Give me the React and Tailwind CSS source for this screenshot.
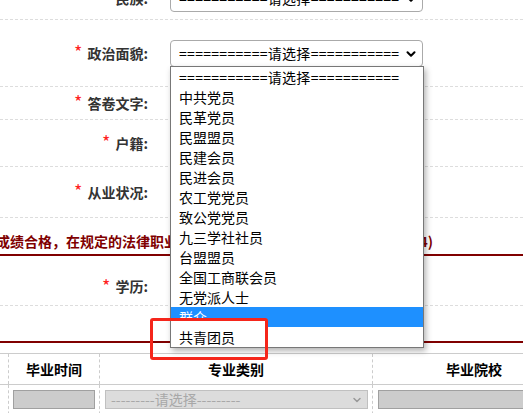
import React from "react";
import { ChevronDown } from "lucide-react";

const options = [
    "===========请选择===========",
    "中共党员",
    "民革党员",
    "民盟盟员",
    "民建会员",
    "民进会员",
    "农工党党员",
    "致公党党员",
    "九三学社社员",
    "台盟盟员",
    "全国工商联会员",
    "无党派人士",
    "群众",
    "共青团员",
];

const Label = ({ text, required = true }) => (
    <div className="w-[148px] shrink-0 flex justify-end items-center text-[14px] font-bold text-[#333] whitespace-nowrap">
        {required && <span className="font-normal text-[18px] leading-none text-[#f22] mr-[5px] -mt-[4px]">*</span>}
        <span>{text}:</span>
    </div>
);

const FakeSelect = () => (
    <div className="relative ml-[22px] w-[253px] h-[27px] border border-[#aaa] rounded-[4px] bg-white flex items-center pl-[8px] text-[14px] tracking-[0.3px] text-black whitespace-nowrap">
        ===========请选择===========
        <ChevronDown className="absolute right-[4px] top-[6px] w-[14px] h-[14px]" strokeWidth={3.5} />
    </div>
);

const Row = ({ h, label, children, className = "" }) => (
    <div className={`flex items-center border-b border-dashed border-[#ddd] ${h} ${className}`}>
        <Label text={label} />
        {children}
    </div>
);

export default function App() {
    return (
        <div className="relative w-[523px] h-[413px] overflow-hidden bg-white font-['Noto_Sans_CJK_SC','Microsoft_YaHei',sans-serif]">
            <div className="-mt-[22px]">
                <Row h="h-[42px]" label="民族">
                    <FakeSelect />
                </Row>
                <Row h="h-[67px]" label="政治面貌">
                    <FakeSelect />
                </Row>
                <Row h="h-[33px]" label="答卷文字" />
                <Row h="h-[47px]" label="户籍" />
                <Row h="h-[51px]" label="从业状况" />

                <div className="h-[38px] flex items-end pb-[2px] border-b-2 border-[#800000]">
                    <div className="flex w-[437px] -ml-[4px] text-[14px] font-bold text-[#800000] whitespace-nowrap">
                        <span className="flex-1 min-w-0 overflow-hidden">成绩合格，在规定的法律职业资格考试年度内完成申请（201</span>
                        <span>4)</span>
                    </div>
                </div>

                <Row h="h-[50px]" label="学历" className="pt-[12px]" />
                <div className="h-[37px] border-b-2 border-[#800000]" />

                <div className="mt-[10px] w-[575px]">
                    <div className="grid grid-cols-[9px_91px_273px_202px] h-[32px] border-y border-[#ccc] text-[14px] font-bold text-black">
                        <div className="border-r border-dashed border-[#ccc]" />
                        <div className="border-r border-dashed border-[#ccc] flex items-center justify-center">毕业时间</div>
                        <div className="border-r border-dashed border-[#ccc] flex items-center justify-center">专业类别</div>
                        <div className="flex items-center justify-center">毕业院校</div>
                    </div>
                    <div className="grid grid-cols-[9px_91px_273px_202px] h-[40px]">
                        <div className="border-r border-dashed border-[#ccc]" />
                        <div className="border-r border-dashed border-[#ccc] pt-[5px] pl-[4px]">
                            <div className="w-[82px] h-[19px] bg-[#ccc] border border-[#a0a0a0]" />
                        </div>
                        <div className="border-r border-dashed border-[#ccc] pt-[5px] pl-[5px]">
                            <div className="relative w-[263px] h-[19px] bg-[#dcdcdc] border border-[#c0c0c0] flex items-center pl-[5px] text-[14px] text-[#a8a8a8] whitespace-nowrap">
                                ---------请选择---------
                                <ChevronDown className="absolute right-[4px] top-[3px] w-[12px] h-[12px] text-[#999]" strokeWidth={3} />
                            </div>
                        </div>
                        <div className="pt-[5px] pl-[5px]">
                            <div className="w-[190px] h-[19px] bg-[#ccc] border border-[#a0a0a0]" />
                        </div>
                    </div>
                </div>
            </div>

            {/* open list of the 政治面貌 select */}
            <div className="absolute left-[170px] top-[66px] w-[254px] bg-white border border-[#777] shadow-[2px_3px_6px_rgba(0,0,0,0.3)] text-[14px] text-black">
                {options.map((o, i) => (
                    <div
                        key={o}
                        className={`h-[20px] leading-[20px] pl-[8px] whitespace-nowrap ${i === 0 ? "tracking-[0.3px]" : ""} ${i === 12 ? "bg-[#1e90ff] text-white" : ""}`}
                    >
                        {o}
                    </div>
                ))}
            </div>

            {/* annotation box */}
            <div className="absolute left-[171px] top-[321px] w-[94px] h-[7px] bg-white" />
            <div className="absolute left-[150px] top-[318px] w-[118px] h-[42px] border-[3px] border-[#f5261b] rounded-[3px]" />
        </div>
    );
}
